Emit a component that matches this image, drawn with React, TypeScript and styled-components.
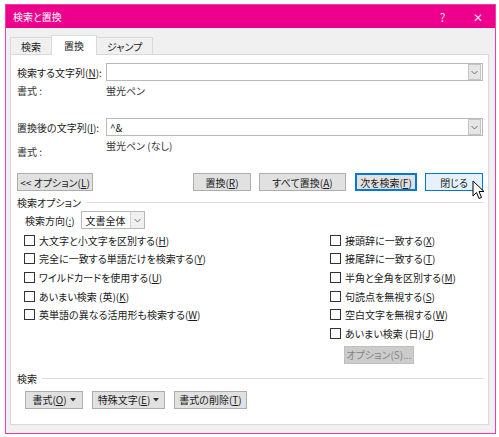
import React from "react";
import styled, { createGlobalStyle, css } from "styled-components";

const Global = createGlobalStyle`
  html, body { margin: 0; padding: 0; background: #ffffff; }
  body {
    font-family: "Noto Sans CJK JP", "Noto Sans", sans-serif;
    font-size: 10px;
    font-feature-settings: "palt";
    color: #1a1a1a;
  }
  u { text-underline-offset: 1px; }
`;

const Page = styled.div`
  padding: 4px 0 0 5px;
`;

const Window = styled.div`
  position: relative;
  width: 489px;
  height: 428px;
  border: 1px solid #ec3fa6;
  background: #f0f0f0;
  display: flex;
  flex-direction: column;
`;

const TitleBar = styled.div`
  height: 23px;
  background: #ec008c;
  color: #fff;
  display: flex;
  align-items: center;
  padding: 0 0 0 7px;
  font-size: 10px;
`;

const Title = styled.div`
  flex: 1;
`;

const TitleButton = styled.div`
  width: 35px;
  text-align: center;
  font-size: 12px;
  color: #fbd6ec;
`;

const Body = styled.div`
  flex: 1;
  padding: 7px 6px 8px 4px;
  display: flex;
  flex-direction: column;
`;

const Tabs = styled.div`
  display: flex;
  align-items: flex-end;
  height: 19px;
  position: relative;
  z-index: 1;
`;

const Tab = styled.div<{ $active?: boolean }>`
  height: 16px;
  padding: 0 10px;
  display: flex;
  align-items: center;
  justify-content: center;
  border: 1px solid #d9d9d9;
  border-bottom: none;
  background: #f0f0f0;
  margin-right: -1px;
  ${({ $active }) =>
    $active &&
    css`
      height: 19px;
      background: #fff;
      margin-bottom: -1px;
      padding: 0 12px;
    `}
`;

const Panel = styled.div`
  flex: 1;
  background: #fff;
  border: 1px solid #d9d9d9;
  padding: 8px 5px 0 6px;
  display: flex;
  flex-direction: column;
`;

const FieldRow = styled.div`
  display: flex;
  align-items: center;
  height: 18px;
`;

const Label = styled.div`
  width: 89px;
  white-space: nowrap;
`;

const Input = styled.div`
  flex: 1;
  height: 16px;
  border: 1px solid #b9b9b9;
  display: flex;
  align-items: center;
  padding-left: 3px;
`;

const InputText = styled.div`
  flex: 1;
`;

const DropButton = styled.div`
  width: 11px;
  height: 14px;
  margin-right: 1px;
  background: #e6e6e6;
  border: 1px solid #c4c4c4;
  display: flex;
  align-items: center;
  justify-content: center;
`;

const FormatRow = styled.div<{ $h: number }>`
  display: flex;
  height: ${({ $h }) => $h}px;
  color: #333;
`;

const FormatLabel = styled.div<{ $top: number }>`
  width: 89px;
  padding-top: ${({ $top }) => $top}px;
`;

const FormatValue = styled.div<{ $top: number }>`
  padding-top: ${({ $top }) => $top}px;
`;

const ButtonRow = styled.div`
  display: flex;
  align-items: center;
  height: 20px;
`;

const Button = styled.div<{
  $w: number;
  $ml?: number;
  $variant?: "focus" | "hover" | "disabled";
}>`
  width: ${({ $w }) => $w}px;
  margin-left: ${({ $ml }) => $ml ?? 0}px;
  height: 18px;
  box-sizing: border-box;
  border: 1px solid #adadad;
  background: #e1e1e1;
  display: flex;
  align-items: center;
  justify-content: center;
  white-space: nowrap;
  gap: 3px;
  ${({ $variant }) =>
    $variant === "focus" &&
    css`
      border: 2px solid #0078d7;
    `}
  ${({ $variant }) =>
    $variant === "hover" &&
    css`
      border: 1px solid #0078d7;
      background: #e5f1fb;
    `}
  ${({ $variant }) =>
    $variant === "disabled" &&
    css`
      border: 1px solid #bfbfbf;
      background: #cccccc;
      color: #838383;
    `}
`;

const Spacer = styled.div`
  flex: 1;
`;

const GroupHeader = styled.div<{ $mt: number }>`
  display: flex;
  align-items: center;
  gap: 5px;
  margin-top: ${({ $mt }) => $mt}px;
  height: 14px;
`;

const GroupLine = styled.div`
  flex: 1;
  height: 1px;
  background: #dcdcdc;
`;

const DirectionRow = styled.div`
  display: flex;
  align-items: center;
  gap: 6px;
  height: 20px;
  padding-left: 8px;
  margin-top: 1px;
`;

const Select = styled.div`
  width: 64px;
  height: 18px;
  border: 1px solid #b9b9b9;
  display: flex;
  align-items: center;
  padding-left: 4px;
  box-sizing: border-box;
`;

const SelectText = styled.div`
  flex: 1;
  white-space: nowrap;
`;

const SelectArrow = styled.div`
  width: 13px;
  height: 16px;
  background: #f0f0f0;
  border-left: 1px solid #d0d0d0;
  display: flex;
  align-items: center;
  justify-content: center;
`;

const Options = styled.div`
  display: flex;
  padding-left: 7px;
  margin-top: 1px;
`;

const OptionColumn = styled.div<{ $w?: number }>`
  display: flex;
  flex-direction: column;
  width: ${({ $w }) => ($w ? `${$w}px` : "auto")};
`;

const CheckRow = styled.label`
  display: flex;
  align-items: center;
  gap: 4px;
  height: 18.6px;
  white-space: nowrap;
`;

const Box = styled.span`
  width: 9px;
  height: 9px;
  border: 1px solid #333;
  background: #fff;
  flex: none;
`;

const OptionButtonRow = styled.div`
  display: flex;
  padding-left: 14px;
  margin-top: 3px;
`;

const BottomButtons = styled.div`
  display: flex;
  gap: 9px;
  padding-left: 8px;
  margin-top: 5px;
`;

const Cursor = styled.svg`
  position: absolute;
  left: 466px;
  top: 175px;
`;

const Chevron = () => (
  <svg width="7" height="5" viewBox="0 0 7 5">
    <path d="M0.5 1 L3.5 4 L6.5 1" fill="none" stroke="#606060" strokeWidth="0.9" />
  </svg>
);

const Caret = () => (
  <svg width="6" height="4" viewBox="0 0 6 4">
    <path d="M0 0 H6 L3 3.5 Z" fill="#333" />
  </svg>
);

const Check = ({ children }: { children: React.ReactNode }) => (
  <CheckRow>
    <Box />
    <span>{children}</span>
  </CheckRow>
);

export default function App() {
  return (
    <Page>
      <Global />
      <Window>
        <TitleBar>
          <Title>検索と置換</Title>
          <TitleButton>?</TitleButton>
          <TitleButton>✕</TitleButton>
        </TitleBar>
        <Body>
          <Tabs>
            <Tab>検索</Tab>
            <Tab $active>置換</Tab>
            <Tab>ジャンプ</Tab>
          </Tabs>
          <Panel>
            <FieldRow>
              <Label>
                検索する文字列(<u>N</u>):
              </Label>
              <Input>
                <InputText />
                <DropButton>
                  <Chevron />
                </DropButton>
              </Input>
            </FieldRow>
            <FormatRow $h={37}>
              <FormatLabel $top={2}>書式 :</FormatLabel>
              <FormatValue $top={2}>蛍光ペン</FormatValue>
            </FormatRow>
            <FieldRow>
              <Label>
                置換後の文字列(<u>I</u>):
              </Label>
              <Input>
                <InputText>^&amp;</InputText>
                <DropButton>
                  <Chevron />
                </DropButton>
              </Input>
            </FieldRow>
            <FormatRow $h={36}>
              <FormatLabel $top={8}>書式 :</FormatLabel>
              <FormatValue $top={2}>蛍光ペン (なし)</FormatValue>
            </FormatRow>
            <ButtonRow>
              <Button $w={76}>
                <span>
                  &lt;&lt; オプション(<u>L</u>)
                </span>
              </Button>
              <Spacer />
              <Button $w={58}>
                <span>
                  置換(<u>R</u>)
                </span>
              </Button>
              <Button $w={87} $ml={8}>
                <span>
                  すべて置換(<u>A</u>)
                </span>
              </Button>
              <Button $w={62} $ml={9} $variant="focus">
                <span>
                  次を検索(<u>F</u>)
                </span>
              </Button>
              <Button $w={58} $ml={8} $variant="hover">
                <span>閉じる</span>
              </Button>
            </ButtonRow>
            <GroupHeader $mt={3}>
              <span>検索オプション</span>
              <GroupLine />
            </GroupHeader>
            <DirectionRow>
              <span>
                検索方向(<u>:</u>)
              </span>
              <Select>
                <SelectText>文書全体</SelectText>
                <SelectArrow>
                  <Chevron />
                </SelectArrow>
              </Select>
            </DirectionRow>
            <Options>
              <OptionColumn $w={306}>
                <Check>
                  大文字と小文字を区別する(<u>H</u>)
                </Check>
                <Check>
                  完全に一致する単語だけを検索する(<u>Y</u>)
                </Check>
                <Check>
                  ワイルドカードを使用する(<u>U</u>)
                </Check>
                <Check>
                  あいまい検索 (英)(<u>K</u>)
                </Check>
                <Check>
                  英単語の異なる活用形も検索する(<u>W</u>)
                </Check>
              </OptionColumn>
              <OptionColumn>
                <Check>
                  接頭辞に一致する(<u>X</u>)
                </Check>
                <Check>
                  接尾辞に一致する(<u>T</u>)
                </Check>
                <Check>
                  半角と全角を区別する(<u>M</u>)
                </Check>
                <Check>
                  句読点を無視する(<u>S</u>)
                </Check>
                <Check>
                  空白文字を無視する(<u>W</u>)
                </Check>
                <Check>
                  あいまい検索 (日)(<u>J</u>)
                </Check>
                <OptionButtonRow>
                  <Button $w={70} $variant="disabled">
                    <span>オプション(S)...</span>
                  </Button>
                </OptionButtonRow>
              </OptionColumn>
            </Options>
            <GroupHeader $mt={8}>
              <span>検索</span>
              <GroupLine />
            </GroupHeader>
            <BottomButtons>
              <Button $w={58}>
                <span>
                  書式(<u>O</u>)
                </span>
                <Caret />
              </Button>
              <Button $w={73}>
                <span>
                  特殊文字(<u>E</u>)
                </span>
                <Caret />
              </Button>
              <Button $w={73}>
                <span>
                  書式の削除(<u>T</u>)
                </span>
              </Button>
            </BottomButtons>
          </Panel>
        </Body>
        <Cursor width="14" height="22" viewBox="0 0 14 22">
          <path
            d="M1 1 L1 16 L4.5 12.5 L7 18.5 L9.5 17.5 L7 11.5 L12 11.5 Z"
            fill="#fff"
            stroke="#000"
            strokeWidth="1"
            strokeLinejoin="round"
          />
        </Cursor>
      </Window>
    </Page>
  );
}
